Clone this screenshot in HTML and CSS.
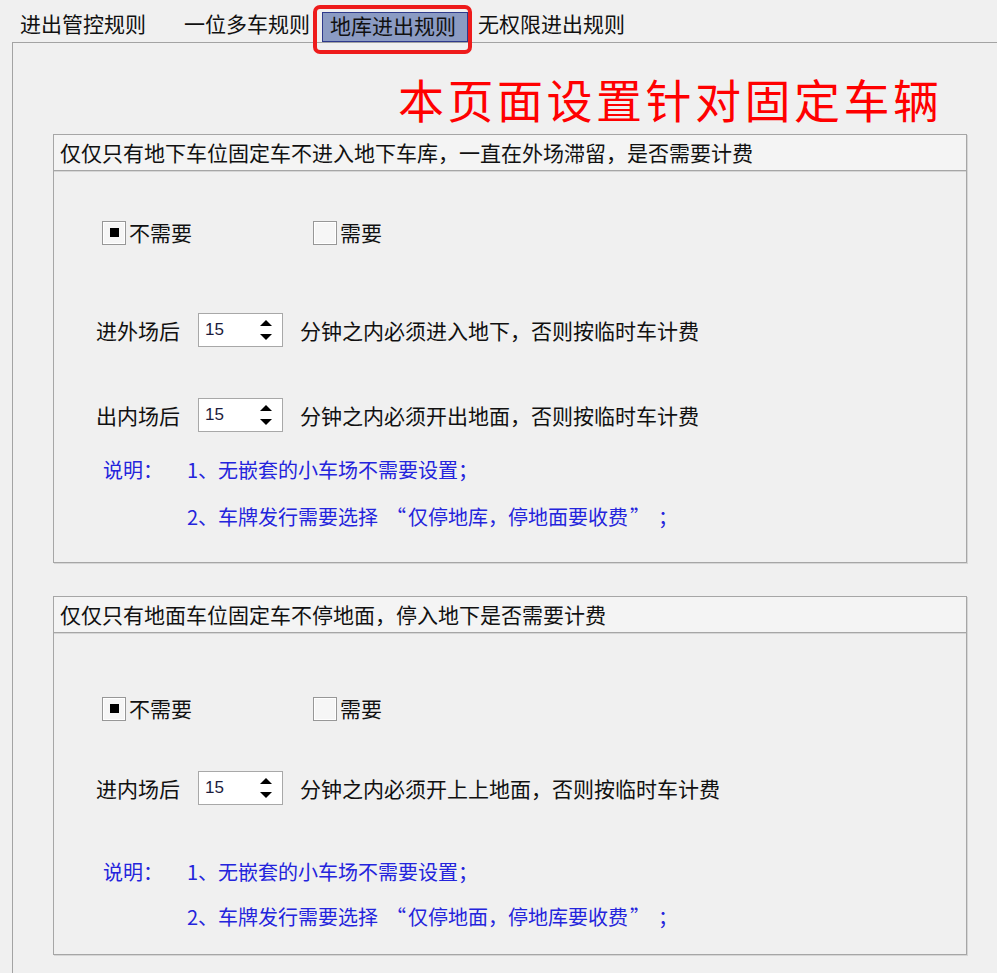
FILE: index.html
```html
<!DOCTYPE html>
<html lang="zh-CN">
<head>
<meta charset="utf-8">
<title>地库进出规则</title>
<link rel="stylesheet" href="styles.css">
</head>
<body>
<div class="tabs">
  <span class="tab t1">进出管控规则</span>
  <span class="tab t2">一位多车规则</span>
  <span class="tab active">地库进出规则<span class="mark"></span></span>
  <span class="tab t4">无权限进出规则</span>
</div>
<div class="panel">
  <div class="notice">本页面设置针对固定车辆</div>

  <section class="group g1">
    <div class="group-head">仅仅只有地下车位固定车不进入地下车库，一直在外场滞留，是否需要计费</div>
    <div class="group-body">
      <div class="checks">
        <label class="check"><span class="box on"></span>不需要</label>
        <label class="check"><span class="box"></span>需要</label>
      </div>
      <div class="field f1">
        <span class="flabel">进外场后</span>
        <span class="spin"><span class="val">15</span><span class="arrows"><svg width="14" height="24" viewBox="0 0 14 24"><path d="M7 2 L13 8 L1 8 Z" fill="#000"/><path d="M1 16 L13 16 L7 22 Z" fill="#000"/></svg></span></span>
        <span class="ftext">分钟之内必须进入地下，否则按临时车计费</span>
      </div>
      <div class="field f2">
        <span class="flabel">出内场后</span>
        <span class="spin"><span class="val">15</span><span class="arrows"><svg width="14" height="24" viewBox="0 0 14 24"><path d="M7 2 L13 8 L1 8 Z" fill="#000"/><path d="M1 16 L13 16 L7 22 Z" fill="#000"/></svg></span></span>
        <span class="ftext">分钟之内必须开出地面，否则按临时车计费</span>
      </div>
      <div class="note">
        <span class="note-k">说明：</span>
        <div class="note-lines">
          <div>1、无嵌套的小车场不需要设置；</div>
          <div>2、车牌发行需要选择<span class="qo">“</span>仅停地库，停地面要收费<span class="qc">”</span>；</div>
        </div>
      </div>
    </div>
  </section>

  <section class="group g2">
    <div class="group-head">仅仅只有地面车位固定车不停地面，停入地下是否需要计费</div>
    <div class="group-body">
      <div class="checks">
        <label class="check"><span class="box on"></span>不需要</label>
        <label class="check"><span class="box"></span>需要</label>
      </div>
      <div class="field f1">
        <span class="flabel">进内场后</span>
        <span class="spin"><span class="val">15</span><span class="arrows"><svg width="14" height="24" viewBox="0 0 14 24"><path d="M7 2 L13 8 L1 8 Z" fill="#000"/><path d="M1 16 L13 16 L7 22 Z" fill="#000"/></svg></span></span>
        <span class="ftext">分钟之内必须开上上地面，否则按临时车计费</span>
      </div>
      <div class="note">
        <span class="note-k">说明：</span>
        <div class="note-lines">
          <div>1、无嵌套的小车场不需要设置；</div>
          <div>2、车牌发行需要选择<span class="qo">“</span>仅停地面，停地库要收费<span class="qc">”</span>；</div>
        </div>
      </div>
    </div>
  </section>
</div>
</body>
</html>
```
FILE: styles.css
```css
html, body {
  margin: 0;
  padding: 0;
  background: #f0f0f0;
  overflow: hidden;
}
body {
  width: 997px;
  height: 973px;
  font-family: "Noto Sans CJK SC", "Noto Sans", sans-serif;
  font-size: 21px;
  color: #111;
}

/* tabs */
.tabs {
  height: 42px;
  display: flex;
  align-items: flex-end;
  padding-left: 20px;
}
.tab {
  display: block;
  height: 28px;
  line-height: 24px;
  padding-bottom: 3px;
  white-space: nowrap;
}
.t2 { margin-left: 38px; }
.active {
  position: relative;
  margin-left: 12px;
  height: 26px;
  padding: 0 11px 2px 7px;
  background: #8b9bc3;
  border: 1px solid #2e3a8c;
}
.t4 { margin-left: 10px; }
.mark {
  position: absolute;
  left: -10px;
  top: -8px;
  width: 151px;
  height: 41px;
  border: 4px solid #ee1b1b;
  border-radius: 7px;
}

/* panel */
.panel {
  margin-left: 12px;
  border-left: 1px solid #a3a3a3;
  border-top: 1px solid #a3a3a3;
  height: 940px;
}
.notice {
  padding: 27px 0 0 385px;
  height: 56px;
  line-height: 56px;
  font-size: 46px;
  letter-spacing: 3.5px;
  color: #ff0000;
  white-space: nowrap;
}

/* group boxes */
.group {
  margin-left: 40px;
  width: 914px;
  box-sizing: border-box;
  border: 1px solid #a6a6a6;
  box-shadow: 1px 1px 0 #d6d6d6;
}
.g1 { margin-top: 8px; }
.g2 { margin-top: 33px; }
.group-head {
  height: 35px;
  line-height: 35px;
  padding-left: 6px;
  background: #f4f4f4;
  border-bottom: 1px solid #a6a6a6;
  box-shadow: 0 1px 0 #d6d6d6;
  white-space: nowrap;
}
.group-body {
  display: flex;
  flex-direction: column;
}

.checks {
  display: flex;
  padding-left: 48px;
  height: 25px;
  align-items: center;
}
.g1 .checks { margin-top: 49px; }
.g2 .checks { margin-top: 63px; }
.check {
  display: flex;
  align-items: center;
  width: 211px;
  gap: 3px;
  line-height: 25px;
}
.box {
  width: 22px;
  height: 22px;
  border: 1px solid #979797;
  background: #f6f6f6;
  box-shadow: inset 0 0 0 1px #ffffff;
  display: flex;
  align-items: center;
  justify-content: center;
}
.box.on::after {
  content: "";
  width: 9px;
  height: 9px;
  background: #000;
}

.field {
  display: flex;
  align-items: center;
  height: 34px;
  padding-left: 42px;
  white-space: nowrap;
}
.g1 .f1 { margin-top: 68px; }
.g1 .f2 { margin-top: 51px; }
.g2 .f1 { margin-top: 50px; }
.spin {
  margin-left: 18px;
  width: 85px;
  height: 34px;
  box-sizing: border-box;
  border: 1px solid #a8a8a8;
  background: #fff;
  display: flex;
  align-items: center;
}
.val {
  flex: 1;
  padding-left: 6px;
  font-family: "Liberation Sans", Arial, sans-serif;
  font-size: 17px;
  color: #1c1c3c;
}
.arrows {
  width: 26px;
  height: 100%;
  display: flex;
  align-items: center;
  justify-content: flex-start;
  padding-left: 3px;
  box-sizing: border-box;
}
.ftext { margin-left: 17px; }

.note {
  display: flex;
  padding-left: 49px;
  color: #2424dc;
  font-size: 20px;
  line-height: 30px;
  white-space: nowrap;
}
.qo, .qc {
  display: inline-block;
  width: 1.5em;
  box-sizing: border-box;
}
.qo { text-align: right; padding-right: 2px; }
.qc { text-align: left; padding-left: 2px; }
.g1 .note { margin-top: 23px; padding-bottom: 30px; }
.g2 .note { margin-top: 52px; padding-bottom: 22px; }
.note-k { width: 84px; }
.note-lines {
  display: flex;
  flex-direction: column;
}
.g1 .note-lines { gap: 17px; }
.g2 .note-lines { gap: 15px; }
```
